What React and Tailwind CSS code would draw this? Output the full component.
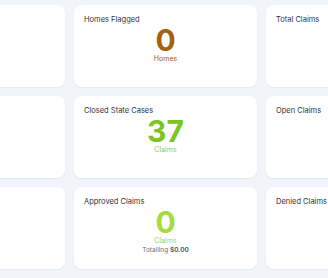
const cards = [
    { title: '', value: null },
    { title: 'Homes Flagged', value: '0', label: 'Homes', valueColor: 'text-[#a2620f]', labelColor: 'text-[#a2620f]' },
    { title: 'Total Claims', value: null },
    { title: '', value: null },
    { title: 'Closed State Cases', value: '37', label: 'Claims', valueColor: 'text-[#7cc520]', labelColor: 'text-[#8fcc45]' },
    { title: 'Open Claims', value: null },
    { title: '', value: null },
    { title: 'Approved Claims', value: '0', label: 'Claims', valueColor: 'text-[#a6dc3c]', labelColor: 'text-[#9dd63a]', total: '$0.00' },
    { title: 'Denied Claims', value: null },
];

const StatCard = ({ card }) => (
    <div className="bg-white rounded-[8px] shadow-[0_1px_2px_rgba(30,40,70,0.06)] px-[10px] pt-[10px] flex flex-col">
        <p className="text-[7.5px] leading-[10px] text-[#2f333c]">{card.title}</p>
        {card.value !== null && (
            <div className="flex flex-col items-center">
                <span className={`text-[30px] leading-[30px] font-bold ${card.valueColor}`}>{card.value}</span>
                <span className={`text-[7px] leading-[8px] ${card.labelColor}`}>{card.label}</span>
                {card.total && (
                    <span className="text-[6.5px] leading-[9px] mt-[1px] text-[#6b6f78]">
                        Totalling <span className="font-semibold text-[#4a4e57]">{card.total}</span>
                    </span>
                )}
            </div>
        )}
    </div>
);

export default function App() {
    return (
        <div className="w-[328px] h-[278px] overflow-hidden bg-[#f1f4f9]" style={{ fontFamily: 'Inter, "Noto Sans", sans-serif' }}>
            <div className="grid grid-cols-[183px_183px_183px] auto-rows-[82px] gap-x-[9px] gap-y-[9px] ml-[-118px] pt-[5px] w-[567px]">
                {cards.map((card, i) => (
                    <StatCard key={i} card={card} />
                ))}
            </div>
        </div>
    );
}
